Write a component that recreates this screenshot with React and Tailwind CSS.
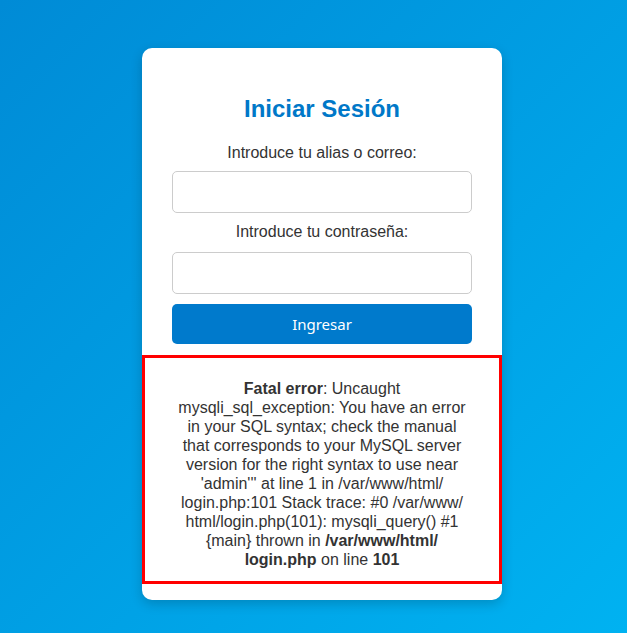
const errorLines = [
  "mysqli_sql_exception: You have an error",
  "in your SQL syntax; check the manual",
  "that corresponds to your MySQL server",
  "version for the right syntax to use near",
  "'admin''' at line 1 in /var/www/html/",
  "login.php:101 Stack trace: #0 /var/www/",
  "html/login.php(101): mysqli_query() #1",
];

export default function App() {
  return (
    <div className="min-h-[633px] w-full bg-linear-135 from-[#008bd6] to-[#00b2f1] pl-[142px] pt-[48px] font-['Liberation_Sans',Arial,sans-serif]">
      <div className="flex w-[360px] flex-col rounded-[10px] bg-white pb-[16px] pt-[47px] shadow-[0_4px_12px_rgba(0,0,0,0.18)]">
        <h2 className="text-center text-[24px] font-bold leading-[28px] text-[#0078c8]">
          Iniciar Sesión
        </h2>

        <form className="mt-[20px] flex flex-col px-[30px]">
          <label className="text-center text-[16px] leading-[20px] text-[#333]">
            Introduce tu alias o correo:
          </label>
          <input
            type="text"
            className="mt-[8px] h-[42px] rounded-[5px] border border-[#ccc] px-3"
          />
          <label className="mt-[10px] text-center text-[16px] leading-[18px] text-[#333]">
            Introduce tu contraseña:
          </label>
          <input
            type="password"
            className="mt-[11px] h-[42px] rounded-[5px] border border-[#ccc] px-3"
          />
          <button
            type="button"
            className="mt-[10px] h-[40px] rounded-[5px] bg-[#007acc] font-['Noto_Sans',sans-serif] text-[15px] text-white"
          >
            Ingresar
          </button>
        </form>

        <div className="mt-[11px] flex flex-col border-[3px] border-[#ff0000] px-[20px] pb-[12px] pt-[21px] text-center text-[16px] leading-[19px] text-[#333]">
          <p>
            <b>Fatal error</b>: Uncaught
          </p>
          {errorLines.map((line) => (
            <p key={line} className="whitespace-nowrap">
              {line}
            </p>
          ))}
          <p>
            {"{main}"} thrown in <b>/var/www/html/</b>
          </p>
          <p>
            <b>login.php</b> on line <b>101</b>
          </p>
        </div>
      </div>
    </div>
  );
}
